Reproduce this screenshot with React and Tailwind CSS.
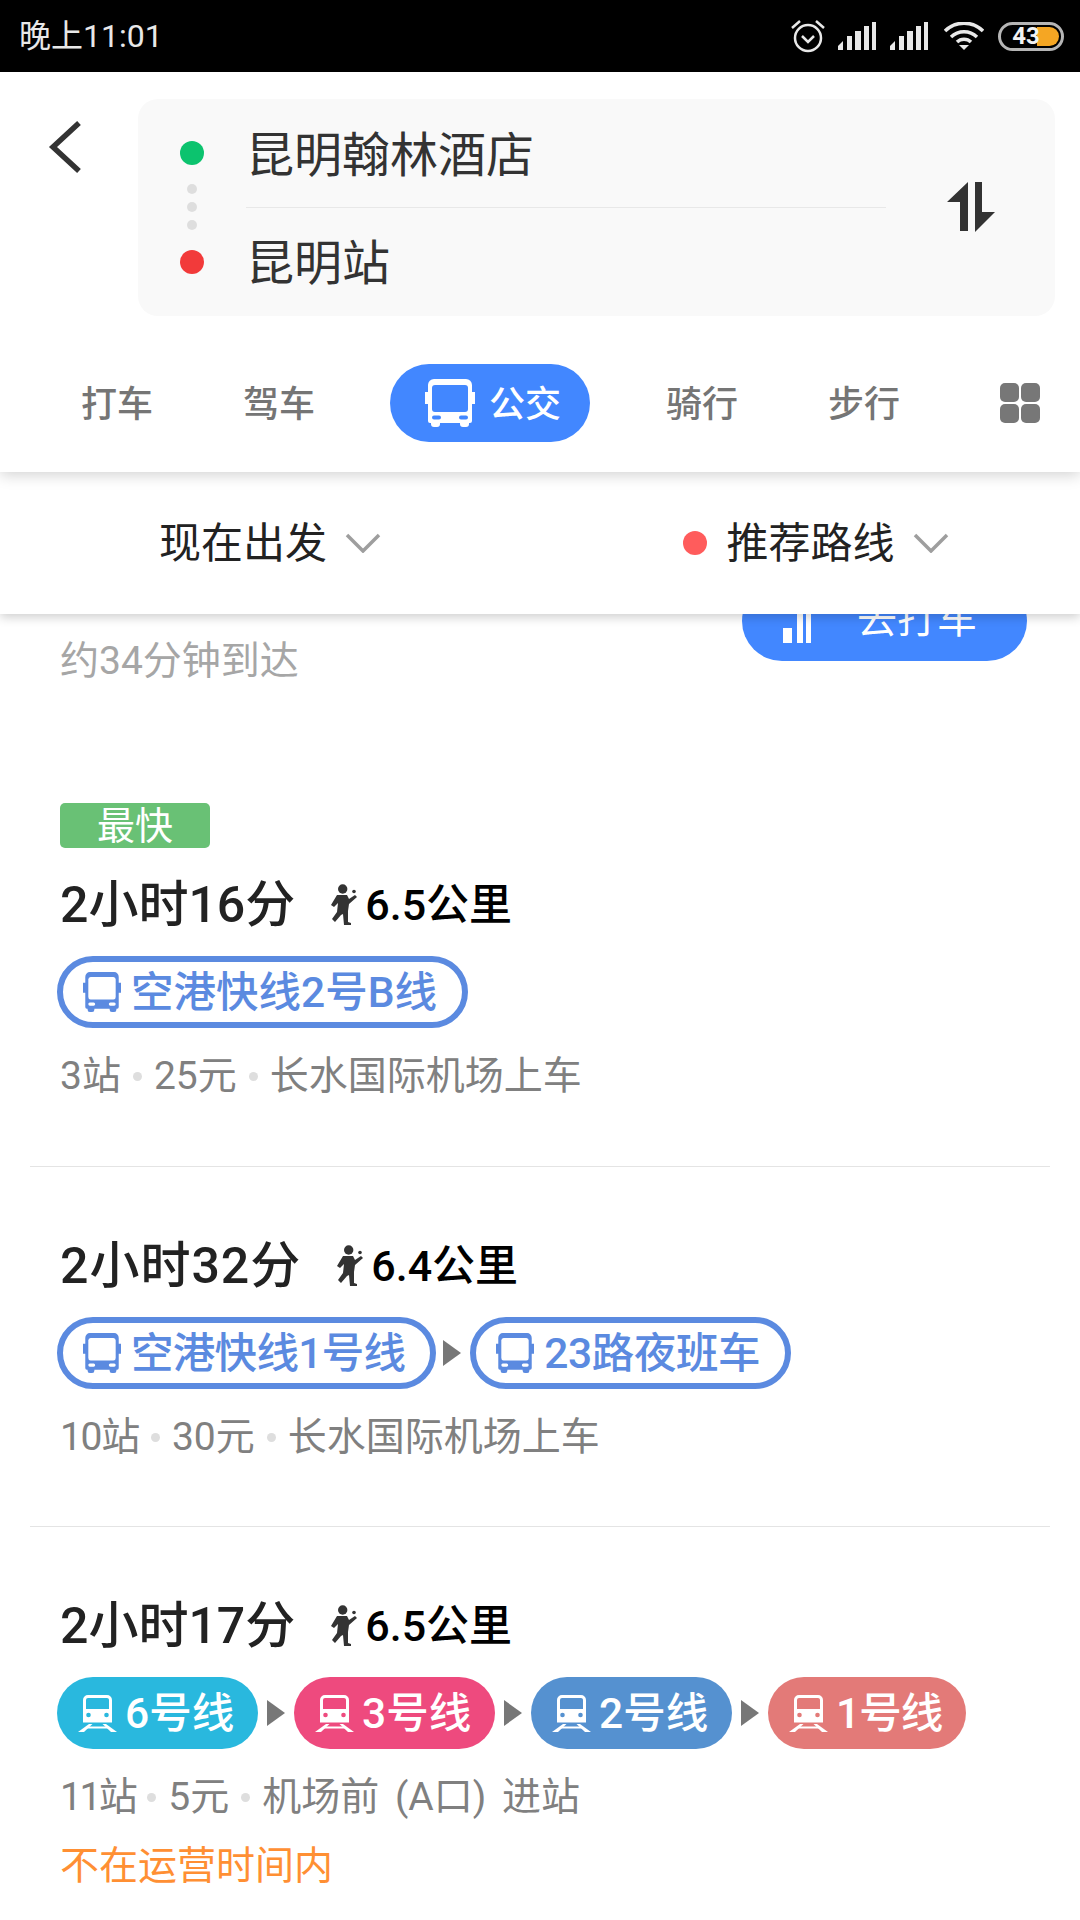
import React from "react";

// Icons
const BusIcon = ({ className, color, cut }) => (
  <svg viewBox="0 0 50 48" preserveAspectRatio="none" className={className}>
    <path
      d="M9 0h32a6 6 0 0 1 6 6v7h3v12h-3v17a2 2 0 0 1-2 2h-1v1a3 3 0 0 1-3 3h-3a3 3 0 0 1-3-3v-1H15v1a3 3 0 0 1-3 3H9a3 3 0 0 1-3-3v-1H5a2 2 0 0 1-2-2V25H0V13h3V6a6 6 0 0 1 6-6z"
      fill={color}
    />
    <rect x="7" y="6" width="36" height="27" rx="3" fill={cut} />
    <rect x="7" y="36.500" width="9" height="4" rx="2" fill={cut} />
    <rect x="34" y="36.500" width="9" height="4" rx="2" fill={cut} />
  </svg>
);

const TrainIcon = ({ cut }) => (
  <svg viewBox="0 0 39 37" className="w-[39px] h-[37px] shrink-0">
    <path d="M10 1.500h19a3.500 3.500 0 0 1 3.500 3.500v21h-26V5a3.500 3.500 0 0 1 3.500-3.500z" fill="none" stroke="#fff" strokeWidth="3" />
    <path d="M6 14h27v10a3 3 0 0 1-3 3H9a3 3 0 0 1-3-3z" fill="#fff" />
    <circle cx="10.500" cy="20" r="2.300" fill={cut} />
    <circle cx="28.500" cy="20" r="2.300" fill={cut} />
    <path d="M11 29h3.500L6 37H0zM24.500 29H28l11 8h-6z" fill="#fff" />
    <rect x="9" y="31.500" width="21" height="2" fill="#fff" />
  </svg>
);

const Walker = () => (
  <svg viewBox="0 0 28 41" className="w-[28px] h-[41px] shrink-0">
    <circle cx="12.700" cy="5" r="4.700" fill="#333" />
    <path d="M7 11h10l2 4 6-4 2 2-8 7-1 7v11l3 1v2h-7l-1-11-2 1-6 7-3-3 5-7 1-9-4 4-3-2z" fill="#333" />
    <circle cx="24" cy="7.500" r="1.800" fill="#333" />
  </svg>
);

const Chevron = ({ className }) => (
  <svg viewBox="0 0 36 20" className={className}>
    <polyline points="2,2 18,18 34,2" fill="none" stroke="#9e9e9e" strokeWidth="3.500" />
  </svg>
);

const Arrow = () => (
  <svg viewBox="0 0 18 26" className="w-[18px] h-[26px] shrink-0">
    <polygon points="0,0 18,13 0,26" fill="#777" />
  </svg>
);

const Signal = () => (
  <svg viewBox="0 0 38 28" className="w-[38px] h-[28px]">
    <polygon points="0,28 0,24 5,19 5,28" fill="#e8e8e8" />
    <rect x="9" y="14" width="5" height="14" fill="#e8e8e8" />
    <rect x="17" y="9" width="6" height="19" fill="#e8e8e8" />
    <rect x="26" y="4" width="5" height="24" fill="#e8e8e8" />
    <rect x="34" y="0" width="4" height="28" fill="#e8e8e8" />
  </svg>
);

const StatusBar = () => (
  <div className="h-[72px] bg-black flex items-center pl-[19px]">
    <span className="text-[32px] leading-none text-[#e8e8e8]">晚上11:01</span>
    <div className="ml-auto mr-[16px] flex items-center">
      <svg viewBox="0 0 36 34" className="w-[36px] h-[34px]">
        <circle cx="18" cy="19" r="13" fill="none" stroke="#e8e8e8" strokeWidth="2.500" />
        <polyline points="12,17 18,23 24,17" fill="none" stroke="#e8e8e8" strokeWidth="2.500" />
        <path d="M2 9l8-7M34 9l-8-7" stroke="#e8e8e8" strokeWidth="2.500" />
      </svg>
      <div className="ml-[12px]"><Signal /></div>
      <div className="ml-[14px]"><Signal /></div>
      <svg viewBox="0 0 40 28" className="ml-[16px] w-[40px] h-[28px]">
        <path d="M1 9a27 27 0 0 1 38 0M7 15a19 19 0 0 1 26 0M13 20a10 10 0 0 1 14 0" fill="none" stroke="#e8e8e8" strokeWidth="3.500" />
        <polygon points="20,28 15,23 25,23" fill="#e8e8e8" />
      </svg>
      <div className="ml-[14px] w-[66px] h-[29px] rounded-full border-[3px] border-[#b5b5b5] relative flex items-center justify-center pr-[10px]">
        <div className="absolute right-[2px] top-[2px] bottom-[2px] w-[22px] rounded-r-full bg-[#f5a623]" />
        <span className="relative text-[24px] leading-none font-bold text-[#f2f2f2]">43</span>
      </div>
    </div>
  </div>
);

const SearchBar = () => (
  <div className="flex">
    <svg viewBox="0 0 34 54" className="ml-[48px] mt-[48px] w-[34px] h-[54px]">
      <polyline points="31,3 5,27 31,51" fill="none" stroke="#333" strokeWidth="5.500" />
    </svg>
    <div className="ml-[56px] mt-[27px] w-[917px] h-[217px] bg-[#f9f9f9] rounded-[20px] flex">
      <div className="ml-[42px] w-[24px] pt-[42px] flex flex-col items-center">
        <div className="w-[24px] h-[24px] rounded-full bg-[#0cc36e]" />
        <div className="mt-[19px] w-[10px] h-[10px] rounded-full bg-[#dedede]" />
        <div className="mt-[8px] w-[10px] h-[10px] rounded-full bg-[#dedede]" />
        <div className="mt-[8px] w-[10px] h-[10px] rounded-full bg-[#dedede]" />
        <div className="mt-[20px] w-[24px] h-[24px] rounded-full bg-[#f23a3a]" />
      </div>
      <div className="ml-[42px] w-[640px] pt-[4px] text-[48px] leading-none text-[#333]">
        <div className="h-[104px] pt-[2px] flex items-center">昆明翰林酒店</div>
        <div className="h-px bg-[#e8e8e8]" />
        <div className="h-[108px] pt-[4px] flex items-center">昆明站</div>
      </div>
      <svg viewBox="0 0 48 50" className="ml-[61px] mt-[83px] w-[48px] h-[50px]">
        <path d="M21 0v49h-8V20H0zM28 0h7v30h13L28 50z" fill="#333" />
      </svg>
    </div>
  </div>
);

const Tabs = () => (
  <div className="flex items-center pl-[36px] mt-[48px] text-[36px] font-medium text-[#757575]">
    <div className="w-[162px] pt-[3px] text-center">打车</div>
    <div className="w-[162px] pt-[3px] text-center">驾车</div>
    <div className="ml-[30px] w-[200px] h-[78px] rounded-full bg-[#4287ff] flex items-center pl-[35px] text-white">
      <BusIcon className="w-[50px] h-[48px]" color="#fff" cut="#4287ff" />
      <span className="ml-[14px] pt-[3px]">公交</span>
    </div>
    <div className="ml-[31px] w-[162px] pt-[3px] text-center">骑行</div>
    <div className="w-[162px] pt-[3px] text-center">步行</div>
    <div className="ml-[55px] w-[40px] grid grid-cols-2 gap-[2px]">
      <div className="h-[19px] rounded-[5px] bg-[#777]" />
      <div className="h-[19px] rounded-[5px] bg-[#777]" />
      <div className="h-[19px] rounded-[5px] bg-[#777]" />
      <div className="h-[19px] rounded-[5px] bg-[#777]" />
    </div>
  </div>
);

const Filters = () => (
  <div className="relative z-10 h-[142px] bg-white flex items-center text-[42px] text-[#222] shadow-[0_3px_10px_rgba(0,0,0,0.2)]">
    <div className="w-[540px] flex items-center justify-center">
      <span>现在出发</span>
      <Chevron className="ml-[18px] w-[36px] h-[20px]" />
    </div>
    <div className="w-[540px] flex items-center justify-center pl-[12px]">
      <div className="w-[24px] h-[24px] rounded-full bg-[#ff5c5c]" />
      <span className="ml-[19px]">推荐路线</span>
      <Chevron className="ml-[18px] w-[36px] h-[20px]" />
    </div>
  </div>
);

const Title = ({ time, dist, timeClass = "" }) => (
  <div className="h-[60px] pl-[60px] flex items-center">
    <span className={`pt-[2px] text-[50px] leading-none font-medium text-[#222] ${timeClass}`}>{time}</span>
    <div className="ml-[35px]"><Walker /></div>
    <span className="ml-[7px] pt-[2px] text-[43px] leading-none font-medium text-black">{dist}</span>
  </div>
);

const BusPill = ({ children, textClass = "" }) => (
  <div className="h-[72px] pl-[20px] pr-[25px] rounded-full border-[6px] border-[#5b8ae0] flex items-center text-[42.500px] font-medium text-[#5b8ae0] -mx-[3px]">
    <BusIcon className="w-[38px] h-[40px] shrink-0" color="#5b8ae0" cut="#fff" />
    <span className={`ml-[10px] pt-[2px] whitespace-nowrap ${textClass}`}>{children}</span>
  </div>
);

const SubwayPill = ({ color, hex, width, children, textClass = "" }) => (
  <div className={`${width} h-[72px] rounded-[36px] ${color} flex items-center pl-[21px] text-[42.500px] font-medium text-white`}>
    <TrainIcon cut={hex} />
    <span className={`ml-[8px] pt-[2px] whitespace-nowrap ${textClass}`}>{children}</span>
  </div>
);

// items: [text, extra class], the digit 1 is narrower in the picture than in Roboto
const Meta = ({ items }) => (
  <div className="mt-[22px] h-[50px] pt-[2px] pl-[60px] flex items-center text-[39px] text-[#808080] [word-spacing:6px]">
    {items.map(([item, cls], i) => (
      <React.Fragment key={item}>
        {i > 0 && <div className="mx-[12px] w-[9px] h-[9px] rounded-full bg-[#dedede]" />}
        <span className={cls}>{item}</span>
      </React.Fragment>
    ))}
  </div>
);

const Divider = () => <div className="mx-[30px] h-px bg-[#e4e4e4]" />;

export default function App() {
  return (
    <div
      className="w-[1080px] h-[1920px] overflow-hidden bg-white"
      style={{ fontFamily: '"Roboto", "Noto Sans CJK SC", sans-serif' }}
    >
      <StatusBar />
      <div className="relative z-20 h-[400px] bg-white shadow-[0_3px_14px_rgba(0,0,0,0.18)]">
        <SearchBar />
        <Tabs />
      </div>
      <Filters />

      {/* partly scrolled away taxi row */}
      <div className="h-[74px] flex justify-between items-end pl-[60px] pr-[53px]">
        <span className="text-[39px] leading-none text-[#a6a6a6] mb-[7px]">约34分钟到达</span>
        <div className="h-[47px] w-[285px] mb-[27px] overflow-hidden flex items-end">
          <div className="shrink-0 w-[285px] h-[80px] rounded-[40px] bg-[#4287ff] flex items-end pb-[18px] pl-[41px] text-[40px] leading-none text-white">
            <svg viewBox="0 0 28 40" className="w-[28px] h-[40px]">
              <path d="M0 25h9v15H0zM14 0h6v40h-6zM23 0h5v40h-5z" fill="#fff" />
            </svg>
            <span className="ml-[46px] mb-[3px]">去打车</span>
          </div>
        </div>
      </div>

      <div className="mt-[115px] ml-[60px] w-[150px] h-[45px] rounded-[5px] bg-[#69c175] flex items-center justify-center text-[38px] leading-none text-white">
        最快
      </div>
      <div className="mt-[26px]">
        <Title time="2小时16分" dist="6.5公里" />
      </div>
      <div className="mt-[22px] pl-[60px] flex">
        <BusPill>空港快线2号B线</BusPill>
      </div>
      <Meta items={[["3站"], ["25元"], ["长水国际机场上车"]]} />
      <div className="h-[66px]" />
      <Divider />

      <div className="mt-[68px]">
        <Title time="2小时32分" dist="6.4公里" timeClass="tracking-[1px]" />
      </div>
      <div className="mt-[22px] pl-[60px] flex items-center">
        <BusPill textClass="tracking-[-0.7px]">空港快线1号线</BusPill>
        <div className="ml-[10px] mr-[12px]"><Arrow /></div>
        <BusPill textClass="tracking-[-0.4px]">23路夜班车</BusPill>
      </div>
      <Meta items={[["10站", "tracking-[-1.300px]"], ["30元"], ["长水国际机场上车"]]} />
      <div className="h-[65px]" />
      <Divider />

      <div className="mt-[68px]">
        <Title time="2小时17分" dist="6.5公里" />
      </div>
      <div className="mt-[22px] pl-[57px] flex items-center gap-[9px]">
        <SubwayPill color="bg-[#29b8de]" hex="#29b8de" width="w-[201px]">6号线</SubwayPill>
        <Arrow />
        <SubwayPill color="bg-[#ee4a7e]" hex="#ee4a7e" width="w-[201px]">3号线</SubwayPill>
        <Arrow />
        <SubwayPill color="bg-[#5591d0]" hex="#5591d0" width="w-[201px]">2号线</SubwayPill>
        <Arrow />
        <SubwayPill color="bg-[#e37a78]" hex="#e37a78" width="w-[198px]" textClass="tracking-[-1px]">1号线</SubwayPill>
      </div>
      <Meta items={[["11站", "tracking-[-2.500px]"], ["5元"], ["机场前 (A口) 进站"]]} />
      <div className="mt-[20px] pl-[60px] text-[39px] leading-[50px] text-[#ff8f33]">不在运营时间内</div>
    </div>
  );
}
